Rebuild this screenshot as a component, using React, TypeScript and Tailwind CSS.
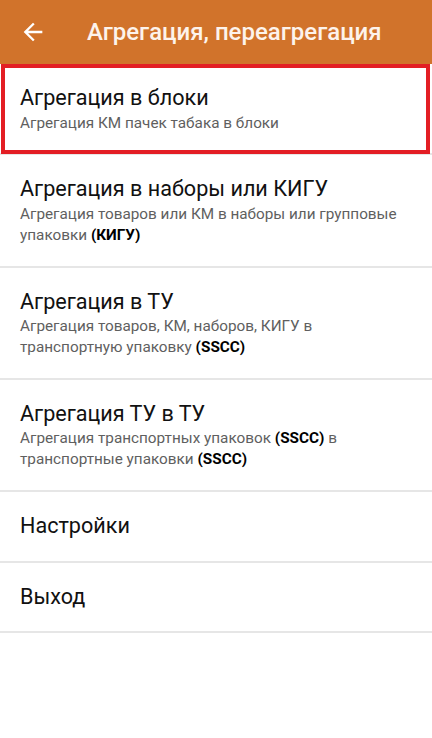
import React from 'react';

type Item = {
  title: string;
  sub?: React.ReactNode;
  active?: boolean;
};

const items: Item[] = [
  { title: 'Агрегация в блоки', sub: 'Агрегация КМ пачек табака в блоки', active: true },
  {
    title: 'Агрегация в наборы или КИГУ',
    sub: (
      <>
        Агрегация товаров или КМ в наборы или групповые<br />
        упаковки <b className="font-bold text-black">(КИГУ)</b>
      </>
    ),
  },
  {
    title: 'Агрегация в ТУ',
    sub: (
      <>
        Агрегация товаров, КМ, наборов, КИГУ в<br />
        транспортную упаковку <b className="font-bold text-black">(SSCC)</b>
      </>
    ),
  },
  {
    title: 'Агрегация ТУ в ТУ',
    sub: (
      <>
        Агрегация транспортных упаковок <b className="font-bold text-black">(SSCC)</b> в<br />
        транспортные упаковки <b className="font-bold text-black">(SSCC)</b>
      </>
    ),
  },
  { title: 'Настройки' },
  { title: 'Выход' },
];

const App: React.FC = () => {
  return (
    <div className="w-[432px] h-[738px] bg-white font-['Roboto',sans-serif] overflow-hidden">
      {/* Toolbar */}
      <header className="h-16 bg-[#d1732b] flex items-center">
        <button className="w-[28px] h-[28px] ml-[19px] text-white">
          <svg viewBox="0 0 24 24" className="w-[28px] h-[28px]" fill="currentColor">
            <path d="M20 11H7.83l5.59-5.59L12 4l-8 8 8 8 1.41-1.41L7.83 13H20v-2z" />
          </svg>
        </button>
        <h1 className="ml-[40px] text-[24px] font-medium text-[#fdf3ec] leading-none">
          Агрегация, переагрегация
        </h1>
      </header>

      <ul>
        {items.map((it) => (
          <li
            key={it.title}
            className="relative px-5 py-5 border-b-2 border-[#e6e6e6]"
          >
            <div className="text-[21.6px] leading-[28.6px] text-[#111]">{it.title}</div>
            {it.sub && (
              <div className="text-[15.3px] leading-[20.8px] text-[#5f5f5f] whitespace-nowrap">{it.sub}</div>
            )}
            {it.active && (
              <div className="absolute top-0 bottom-[-1px] left-[1px] right-[2px] border-4 border-[#e31e24] pointer-events-none" />
            )}
          </li>
        ))}
      </ul>
    </div>
  );
};

export default App;
